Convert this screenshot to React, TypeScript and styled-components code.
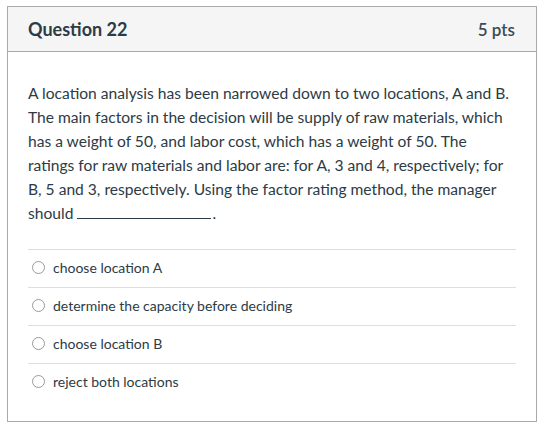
import React from 'react';
import styled, { createGlobalStyle } from 'styled-components';

const GlobalStyle = createGlobalStyle`
  body {
    margin: 0;
    padding: 6px 0 0 7px;
    background: #fff;
    font-family: Lato, 'Open Sans', sans-serif;
    color: #2d3b45;
  }
`;

const Panel = styled('div')`
  box-sizing: border-box;
  width: 530px;
  height: 416px;
  border: 1px solid #aaaaaa;
  background: #fff;
`;

const Header = styled('div')`
  box-sizing: border-box;
  height: 45px;
  display: flex;
  align-items: center;
  justify-content: space-between;
  padding: 0 21px 0 20px;
  background: #f5f5f5;
  border-bottom: 1px solid #aaaaaa;
`;

const Title = styled('h2')`
  margin: 0;
  font-size: 18px;
  font-weight: 700;
  color: #2d3b45;
`;

const Points = styled('span')`
  font-size: 17px;
  font-weight: 600;
  color: #394b58;
`;

const Body = styled('div')`
  padding: 29px 20px 0 20px;
`;

const Prompt = styled('p')`
  margin: 0 0 24px;
  font-size: 15.6px;
  line-height: 24px;
`;

const Blank = styled('span')`
  display: inline-block;
  width: 134px;
  height: 12px;
  margin-right: 1px;
  border-bottom: 1px solid #2d3b45;
`;

const Answers = styled('div')`
  display: flex;
  flex-direction: column;
`;

const Answer = styled('label')`
  box-sizing: border-box;
  height: 38px;
  display: flex;
  align-items: center;
  gap: 8px;
  padding-bottom: 3px;
  border-top: 1px solid #dddddd;
  font-size: 14px;
  cursor: pointer;
`;

const Radio = styled('span')`
  box-sizing: border-box;
  width: 13px;
  height: 13px;
  margin-left: 4px;
  border-radius: 50%;
  border: 1px solid #9a9a9a;
  background: #fff;
`;

const answers = [
  'choose location A',
  'determine the capacity before deciding',
  'choose location B',
  'reject both locations',
];

export default function App() {
  return (
    <>
      <GlobalStyle />
      <Panel>
        <Header>
          <Title>Question 22</Title>
          <Points>5 pts</Points>
        </Header>
        <Body>
          <Prompt>
            A location analysis has been narrowed down to two locations, A and B.
            The main factors in the decision will be supply of raw materials, which
            has a weight of 50, and labor cost, which has a weight of 50. The
            ratings for raw materials and labor are: for A, 3 and 4, respectively; for
            B, 5 and 3, respectively. Using the factor rating method, the manager
            should <Blank />.
          </Prompt>
          <Answers>
            {answers.map((a) => (
              <Answer key={a}>
                <Radio />
                {a}
              </Answer>
            ))}
          </Answers>
        </Body>
      </Panel>
    </>
  );
}
